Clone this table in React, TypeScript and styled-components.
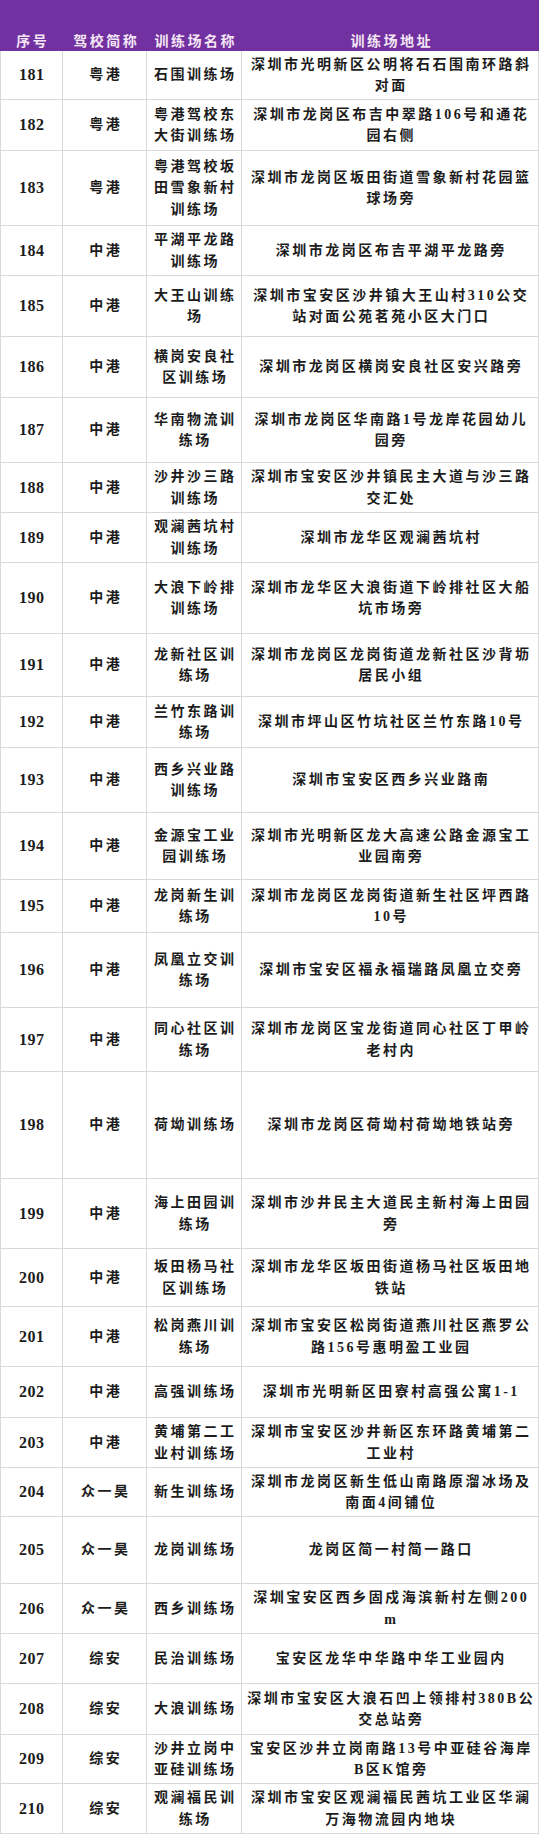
import React from "react";
import styled, { createGlobalStyle } from "styled-components";

const GlobalStyle = createGlobalStyle`
  html, body {
    margin: 0;
    padding: 0;
    background: #ffffff;
  }
  body {
    font-family: "Liberation Serif", "Noto Sans CJK SC", serif;
    color: #1c1c1c;
  }
`;

const COLS = "63px 84px 95px 297px";
const LINE = "#d9d9d9";

const Table = styled.div`
  width: 539px;
  display: flex;
  flex-direction: column;
`;

const HeaderRow = styled.div`
  display: grid;
  grid-template-columns: ${COLS};
  height: 51px;
  background: #7231a1;
`;

const HeaderCell = styled.div`
  display: flex;
  align-items: flex-end;
  justify-content: center;
  color: #f4e6f4;
  font-family: "Noto Sans CJK SC", sans-serif;
  font-weight: 700;
  font-size: 14px;
  letter-spacing: 2.5px;
  padding-left: 2.5px;
  line-height: 21px;
`;

const Row = styled.div<{ $h: number }>`
  display: grid;
  grid-template-columns: ${COLS};
  height: ${(p) => p.$h}px;
  box-sizing: border-box;
  border-bottom: 1px solid ${LINE};
`;

const Cell = styled.div<{ $kind?: "num" | "text" }>`
  box-sizing: border-box;
  display: flex;
  align-items: center;
  justify-content: center;
  text-align: center;
  white-space: pre-line;
  border-right: 1px solid ${LINE};
  font-weight: 700;
  font-size: ${(p) => (p.$kind === "num" ? "16px" : "14px")};
  letter-spacing: ${(p) => (p.$kind === "num" ? "0.5px" : "2.5px")};
  padding-left: ${(p) => (p.$kind === "num" ? "0.5px" : "2.5px")};
  line-height: 21.5px;
  &:first-child {
    border-left: 1px solid ${LINE};
  }
`;

type Entry = [string, string, string, string, number];

const rows: Entry[] = [
  ["181", "粤港", "石围训练场", "深圳市光明新区公明将石石围南环路斜\n对面", 49],
  ["182", "粤港", "粤港驾校东\n大街训练场", "深圳市龙岗区布吉中翠路106号和通花\n园右侧", 51],
  ["183", "粤港", "粤港驾校坂\n田雪象新村\n训练场", "深圳市龙岗区坂田街道雪象新村花园篮\n球场旁", 75],
  ["184", "中港", "平湖平龙路\n训练场", "深圳市龙岗区布吉平湖平龙路旁", 50],
  ["185", "中港", "大王山训练\n场", "深圳市宝安区沙井镇大王山村310公交\n站对面公苑茗苑小区大门口", 61],
  ["186", "中港", "横岗安良社\n区训练场", "深圳市龙岗区横岗安良社区安兴路旁", 61],
  ["187", "中港", "华南物流训\n练场", "深圳市龙岗区华南路1号龙岸花园幼儿\n园旁", 65],
  ["188", "中港", "沙井沙三路\n训练场", "深圳市宝安区沙井镇民主大道与沙三路\n交汇处", 50],
  ["189", "中港", "观澜茜坑村\n训练场", "深圳市龙华区观澜茜坑村", 50],
  ["190", "中港", "大浪下岭排\n训练场", "深圳市龙华区大浪街道下岭排社区大船\n坑市场旁", 71],
  ["191", "中港", "龙新社区训\n练场", "深圳市龙岗区龙岗街道龙新社区沙背坜\n居民小组", 63],
  ["192", "中港", "兰竹东路训\n练场", "深圳市坪山区竹坑社区兰竹东路10号", 51],
  ["193", "中港", "西乡兴业路\n训练场", "深圳市宝安区西乡兴业路南", 65],
  ["194", "中港", "金源宝工业\n园训练场", "深圳市光明新区龙大高速公路金源宝工\n业园南旁", 67],
  ["195", "中港", "龙岗新生训\n练场", "深圳市龙岗区龙岗街道新生社区坪西路\n10号", 53],
  ["196", "中港", "凤凰立交训\n练场", "深圳市宝安区福永福瑞路凤凰立交旁", 75],
  ["197", "中港", "同心社区训\n练场", "深圳市龙岗区宝龙街道同心社区丁甲岭\n老村内", 64],
  ["198", "中港", "荷坳训练场", "深圳市龙岗区荷坳村荷坳地铁站旁", 107],
  ["199", "中港", "海上田园训\n练场", "深圳市沙井民主大道民主新村海上田园\n旁", 70],
  ["200", "中港", "坂田杨马社\n区训练场", "深圳市龙华区坂田街道杨马社区坂田地\n铁站", 58],
  ["201", "中港", "松岗燕川训\n练场", "深圳市宝安区松岗街道燕川社区燕罗公\n路156号惠明盈工业园", 60],
  ["202", "中港", "高强训练场", "深圳市光明新区田寮村高强公寓1-1", 51],
  ["203", "中港", "黄埔第二工\n业村训练场", "深圳市宝安区沙井新区东环路黄埔第二\n工业村", 50],
  ["204", "众一昊", "新生训练场", "深圳市龙岗区新生低山南路原溜冰场及\n南面4间铺位", 49],
  ["205", "众一昊", "龙岗训练场", "龙岗区简一村简一路口", 67],
  ["206", "众一昊", "西乡训练场", "深圳宝安区西乡固戍海滨新村左侧200\nm", 50],
  ["207", "综安", "民治训练场", "宝安区龙华中华路中华工业园内", 50],
  ["208", "综安", "大浪训练场", "深圳市宝安区大浪石凹上领排村380B公\n交总站旁", 51],
  ["209", "综安", "沙井立岗中\n亚硅训练场", "宝安区沙井立岗南路13号中亚硅谷海岸\nB区K馆旁", 49],
  ["210", "综安", "观澜福民训\n练场", "深圳市宝安区观澜福民茜坑工业区华澜\n万海物流园内地块", 50],
];

const headers = ["序号", "驾校简称", "训练场名称", "训练场地址"];

export default function App() {
  return (
    <>
      <GlobalStyle />
      <Table>
        <HeaderRow>
          {headers.map((h) => (
            <HeaderCell key={h}>{h}</HeaderCell>
          ))}
        </HeaderRow>
        {rows.map(([no, school, name, addr, h]) => (
          <Row key={no} $h={h}>
            <Cell $kind="num">{no}</Cell>
            <Cell>{school}</Cell>
            <Cell>{name}</Cell>
            <Cell>{addr}</Cell>
          </Row>
        ))}
      </Table>
    </>
  );
}
